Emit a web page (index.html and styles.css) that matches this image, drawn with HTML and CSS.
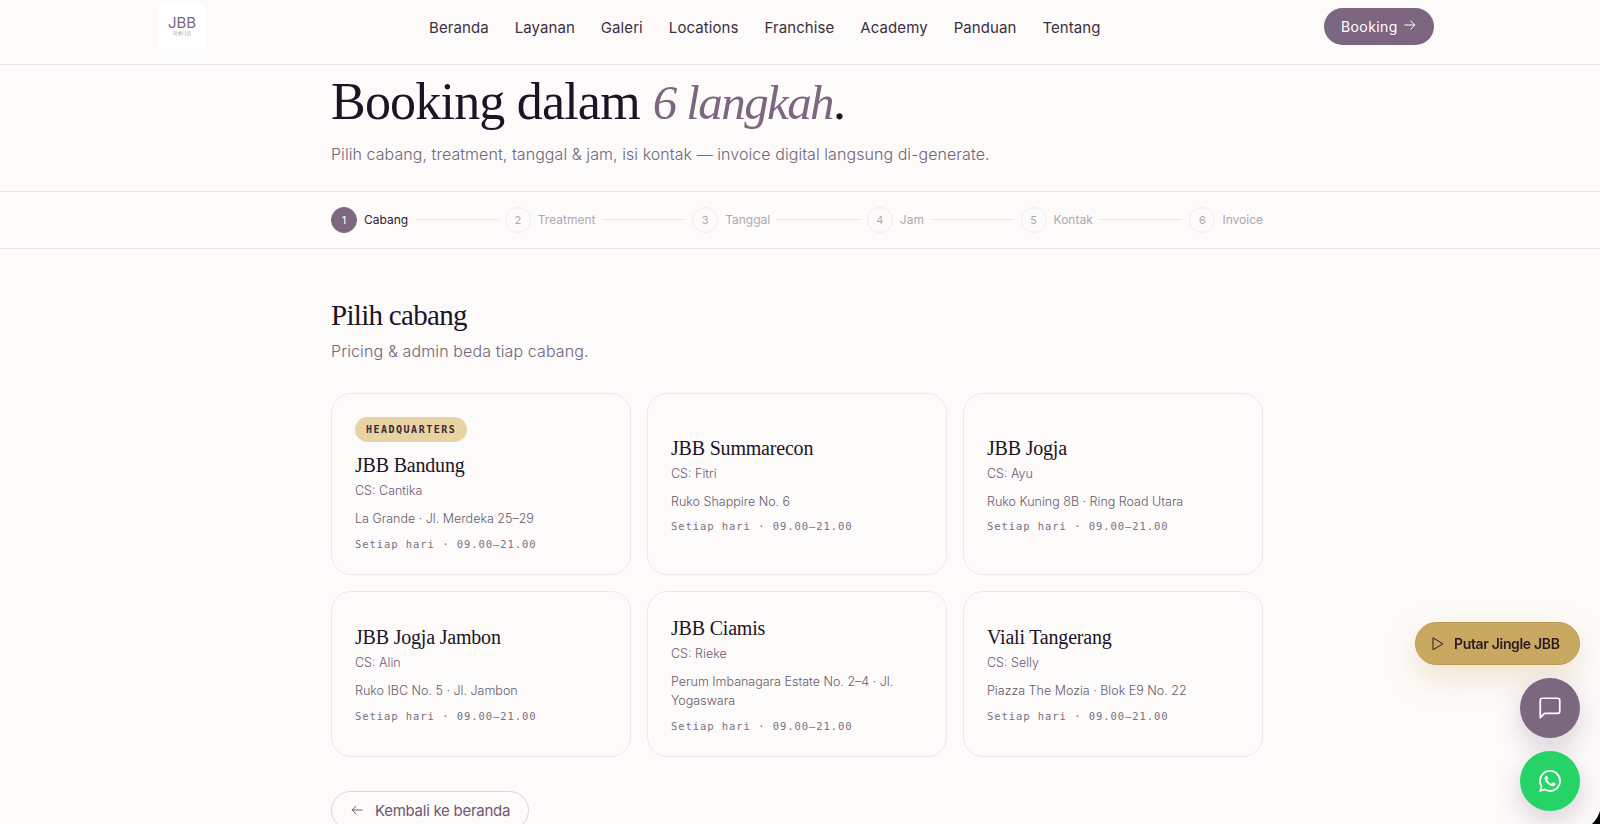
FILE: index.html
```html
<!DOCTYPE html>
<html lang="id">
<head>
    <meta charset="UTF-8">
    <meta name="viewport" content="width=device-width, initial-scale=1.0">
    <title>Booking - JBB</title>
    <link rel="stylesheet" href="styles.css">
</head>
<body>
<header class="navbar">
    <a class="logo" href="#">
        <span class="logo-name">JBB</span>
        <span class="logo-sub">아름다움</span>
    </a>
    <nav class="nav-links">
        <a href="#">Beranda</a>
        <a href="#">Layanan</a>
        <a href="#">Galeri</a>
        <a href="#">Locations</a>
        <a href="#">Franchise</a>
        <a href="#">Academy</a>
        <a href="#">Panduan</a>
        <a href="#">Tentang</a>
    </nav>
    <a class="btn-booking" href="#">
        <span>Booking</span>
        <svg width="12" height="10" viewBox="0 0 12 10"><path d="M0.8 5H10.8M6.8 1L10.8 5L6.8 9"/></svg>
    </a>
</header>

<section class="hero">
    <div class="container">
        <h1><span class="h1-main">Booking dalam</span> <em>6 langkah</em>.</h1>
        <p>Pilih cabang, treatment, tanggal &amp; jam, isi kontak — invoice digital langsung di-generate.</p>
    </div>
</section>

<div class="steps-bar">
    <div class="container steps">
        <div class="step active"><span class="num">1</span><span>Cabang</span></div>
        <div class="line"></div>
        <div class="step"><span class="num">2</span><span>Treatment</span></div>
        <div class="line"></div>
        <div class="step"><span class="num">3</span><span>Tanggal</span></div>
        <div class="line"></div>
        <div class="step"><span class="num">4</span><span>Jam</span></div>
        <div class="line"></div>
        <div class="step"><span class="num">5</span><span>Kontak</span></div>
        <div class="line"></div>
        <div class="step"><span class="num">6</span><span>Invoice</span></div>
    </div>
</div>

<main class="container">
    <h2>Pilih cabang</h2>
    <p class="sub">Pricing &amp; admin beda tiap cabang.</p>

    <div class="cards">
        <button class="card" type="button">
            <span class="badge">HEADQUARTERS</span>
            <span class="name">JBB Bandung</span>
            <span class="cs">CS: Cantika</span>
            <span class="address">La Grande · Jl. Merdeka 25–29</span>
            <span class="hours">Setiap hari · 09.00–21.00</span>
        </button>
        <button class="card" type="button">
            <span class="name">JBB Summarecon</span>
            <span class="cs">CS: Fitri</span>
            <span class="address">Ruko Shappire No. 6</span>
            <span class="hours">Setiap hari · 09.00–21.00</span>
        </button>
        <button class="card" type="button">
            <span class="name">JBB Jogja</span>
            <span class="cs">CS: Ayu</span>
            <span class="address">Ruko Kuning 8B · Ring Road Utara</span>
            <span class="hours">Setiap hari · 09.00–21.00</span>
        </button>
        <button class="card" type="button">
            <span class="name">JBB Jogja Jambon</span>
            <span class="cs">CS: Alin</span>
            <span class="address">Ruko IBC No. 5 · Jl. Jambon</span>
            <span class="hours">Setiap hari · 09.00–21.00</span>
        </button>
        <button class="card" type="button">
            <span class="name">JBB Ciamis</span>
            <span class="cs">CS: Rieke</span>
            <span class="address">Perum Imbanagara Estate No. 2–4 · Jl. Yogaswara</span>
            <span class="hours">Setiap hari · 09.00–21.00</span>
        </button>
        <button class="card" type="button">
            <span class="name">Viali Tangerang</span>
            <span class="cs">CS: Selly</span>
            <span class="address">Piazza The Mozia · Blok E9 No. 22</span>
            <span class="hours">Setiap hari · 09.00–21.00</span>
        </button>
    </div>

    <a class="btn-back" href="#">
        <svg width="12" height="10" viewBox="0 0 12 10"><path d="M11 5H1.2M5 1.2L1.2 5L5 8.8"/></svg>
        <span>Kembali ke beranda</span>
    </a>
</main>

<div class="floating">
    <button class="jingle" type="button">
        <svg width="12" height="14" viewBox="0 0 12 14"><path d="M1 1.2V12.8L10.6 7Z"/></svg>
        <span>Putar Jingle JBB</span>
    </button>
    <button class="round chat" type="button" aria-label="Chat">
        <svg width="26" height="26" viewBox="0 0 24 24"><path d="M21 15a2 2 0 0 1-2 2H7l-4 4V5a2 2 0 0 1 2-2h14a2 2 0 0 1 2 2z"/></svg>
    </button>
    <a class="round whatsapp" href="#" aria-label="WhatsApp">
        <svg width="22" height="22" viewBox="0 0 24 24"><path d="M17.472 14.382c-.297-.149-1.758-.867-2.03-.967-.273-.099-.471-.148-.67.15-.197.297-.767.966-.94 1.164-.173.199-.347.223-.644.075-.297-.15-1.255-.463-2.39-1.475-.883-.788-1.48-1.761-1.653-2.059-.173-.297-.018-.458.13-.606.134-.133.298-.347.446-.52.149-.174.198-.298.298-.497.099-.198.05-.371-.025-.52-.075-.149-.669-1.612-.916-2.207-.242-.579-.487-.5-.669-.51-.173-.008-.371-.01-.57-.01-.198 0-.52.074-.792.372-.272.297-1.04 1.016-1.04 2.479 0 1.462 1.065 2.875 1.213 3.074.149.198 2.096 3.2 5.077 4.487.709.306 1.262.489 1.694.625.712.227 1.36.195 1.871.118.571-.085 1.758-.719 2.006-1.413.248-.694.248-1.289.173-1.413-.074-.124-.272-.198-.57-.347m-5.421 7.403h-.004a9.87 9.87 0 0 1-5.031-1.378l-.361-.214-3.741.982.998-3.648-.235-.374a9.86 9.86 0 0 1-1.51-5.26c.001-5.45 4.436-9.884 9.888-9.884 2.64 0 5.122 1.03 6.988 2.898a9.825 9.825 0 0 1 2.893 6.994c-.003 5.45-4.437 9.884-9.885 9.884m8.413-18.297A11.815 11.815 0 0 0 12.05 0C5.495 0 .16 5.335.157 11.892c0 2.096.547 4.142 1.588 5.945L.057 24l6.305-1.654a11.882 11.882 0 0 0 5.683 1.448h.005c6.554 0 11.89-5.335 11.893-11.893a11.821 11.821 0 0 0-3.48-8.413z"/></svg>
    </a>
</div>
<svg class="corner" width="8" height="13" viewBox="0 0 8 13"><path d="M8 0Q6 7 0 13H8Z"/></svg>
</body>
</html>
```
FILE: styles.css
```css
* {
    box-sizing: border-box;
}

body {
    margin: 0;
    height: 824px;
    overflow: hidden;
    font-family: Inter, "Noto Sans CJK KR", sans-serif;
    background: #fdfbfa;
    color: #1b1426;
}

h1, h2, p {
    margin: 0;
    font-weight: 400;
}

h1, h2, .name {
    font-family: "Liberation Serif", serif;
}

a {
    color: inherit;
    text-decoration: none;
}

svg {
    display: block;
    fill: none;
    stroke: currentColor;
    stroke-linecap: round;
    stroke-linejoin: round;
}

.container {
    width: 932px;
    margin-left: 331px;
}

/* navbar */
.navbar {
    display: grid;
    grid-template-columns: 270px 1fr 110px;
    height: 65px;
    padding: 4px 166px 0 159px;
    border-bottom: 1px solid #ece8eb;
}

.logo {
    display: flex;
    flex-direction: column;
    align-items: center;
    width: 46px;
    height: 45px;
    padding-top: 11px;
    background: #fff;
    color: #7d6680;
}

.logo-name {
    font-size: 15px;
    line-height: 15px;
}

.logo-sub {
    font-size: 5px;
    line-height: 6px;
    color: #a99dab;
}

.nav-links {
    display: flex;
    gap: 26px;
    height: 46px;
    padding-top: 1px;
    align-items: center;
    font-size: 15px;
    font-weight: 400;
    letter-spacing: 0.08px;
    color: #3b2f40;
}

.btn-booking {
    display: flex;
    gap: 6px;
    height: 37px;
    margin-top: 4px;
    padding: 0 17px;
    border-radius: 19px;
    align-items: center;
    background: #7d6680;
    color: #fff;
    font-size: 14px;
    letter-spacing: 0.4px;
}

.btn-booking svg {
    margin-bottom: 3px;
}

/* hero */
.hero {
    height: 127px;
    border-bottom: 1px solid #ebe8ea;
}

h1 {
    height: 69px;
    padding-top: 5px;
    font-size: 52px;
    line-height: 64px;
    white-space: nowrap;
}

.h1-main {
    letter-spacing: -0.8px;
}

h1 em {
    font-size: 49px;
    letter-spacing: -1.6px;
    color: #7d6680;
}

.hero p {
    padding-top: 8px;
    font-size: 16px;
    line-height: 24px;
    font-weight: 300;
    letter-spacing: 0.06px;
    color: #71667a;
}

/* steps */
.steps-bar {
    height: 57px;
    border-bottom: 1px solid #e9e6e8;
}

.steps {
    display: flex;
    align-items: center;
    gap: 7px;
    height: 55px;
}

.step {
    display: flex;
    align-items: center;
    gap: 7px;
    font-size: 12px;
    color: #aea8b0;
}

.step.active {
    color: #2b2032;
}

.num {
    display: flex;
    align-items: center;
    justify-content: center;
    width: 26px;
    height: 26px;
    border: 1px solid #efebee;
    border-radius: 50%;
    font-size: 11px;
}

.step.active .num {
    background: #7d6680;
    border-color: #7d6680;
    color: #fff;
}

.line {
    flex: 1;
    height: 1px;
    background: #e9e5e9;
}

/* cabang */
h2 {
    padding-top: 48px;
    font-size: 29px;
    line-height: 36px;
    letter-spacing: -0.7px;
}

.sub {
    padding-top: 6px;
    font-size: 16px;
    line-height: 24px;
    font-weight: 300;
    letter-spacing: 0.12px;
    color: #71667a;
}

.cards {
    display: grid;
    grid-template-columns: repeat(3, 1fr);
    gap: 16px;
    margin-top: 30px;
}

.card {
    display: flex;
    flex-direction: column;
    align-items: flex-start;
    justify-content: center;
    padding: 23px 23px 21px;
    border: 1px solid #ece8eb;
    border-radius: 20px;
    background: none;
    font-family: inherit;
    text-align: left;
}

.badge {
    height: 25px;
    margin-bottom: 10px;
    padding: 0 11px;
    border-radius: 13px;
    background: #e8d3a5;
    color: #3b2a33;
    font: bold 10px/25px "DejaVu Sans Mono", monospace;
    letter-spacing: 1.5px;
}

.name {
    font-size: 20px;
    line-height: 26px;
    letter-spacing: -0.2px;
    color: #1b1426;
}

.cs {
    margin-top: 3px;
    font-size: 12.5px;
    line-height: 20px;
    font-weight: 300;
    color: #6f5872;
}

.address {
    margin-top: 8px;
    font-size: 12.5px;
    line-height: 19.5px;
    font-weight: 300;
    color: #665c6c;
}

.hours {
    margin-top: 6px;
    font: 10.5px/18px "DejaVu Sans Mono", monospace;
    letter-spacing: 0.94px;
    color: #7a7080;
}

.btn-back {
    display: flex;
    align-items: center;
    gap: 12px;
    width: 198px;
    height: 39px;
    margin-top: 34px;
    padding-left: 19px;
    border: 1px solid #dad4da;
    border-radius: 20px;
    font-size: 15px;
    letter-spacing: -0.27px;
    color: #6e5872;
}

/* floating buttons */
.floating {
    position: fixed;
    right: 20px;
    bottom: 13px;
    display: flex;
    flex-direction: column;
    align-items: flex-end;
    gap: 13px;
}

.floating button {
    border: 0;
    padding: 0;
    font-family: inherit;
}

.floating .jingle {
    display: flex;
    align-items: center;
    gap: 10px;
    width: 165px;
    height: 43px;
    padding-left: 16px;
    border: 1px solid #b99a55;
    border-radius: 22px;
    background: #c9a961;
    color: #2b1a26;
    font-size: 14px;
    font-weight: 600;
    letter-spacing: -0.33px;
    box-shadow: 0 12px 32px rgba(201, 169, 97, 0.3);
}

.round {
    display: flex;
    align-items: center;
    justify-content: center;
    width: 60px;
    height: 60px;
    border-radius: 50%;
    color: #fff;
    box-shadow: 0 10px 28px rgba(60, 40, 70, 0.2);
}

.floating .chat {
    background: #7d6680;
    color: #fff;
}

.chat svg {
    stroke-width: 1.6;
}

.whatsapp {
    background: #25d366;
}

.whatsapp svg {
    fill: #fff;
    stroke: none;
}

.corner {
    position: fixed;
    right: 0;
    bottom: 0;
    fill: #000;
    stroke: none;
}
```
